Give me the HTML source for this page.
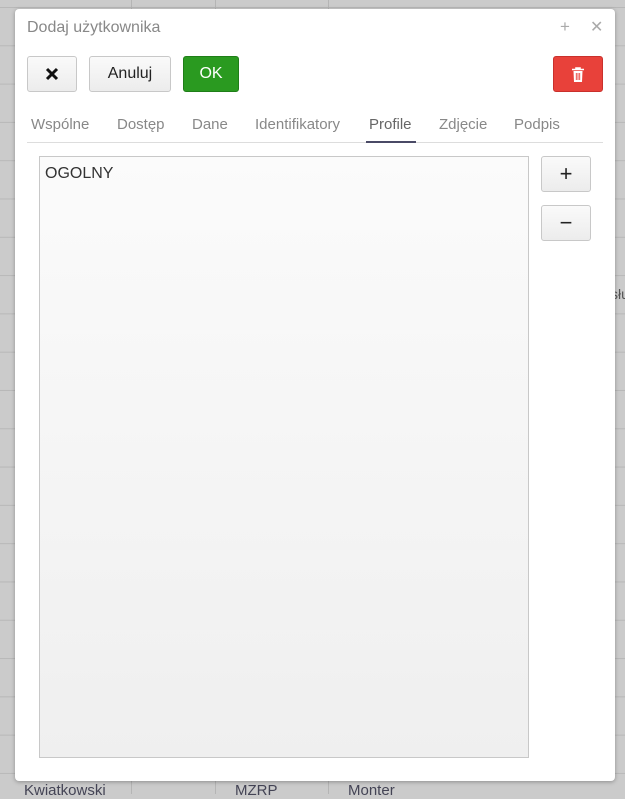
<!DOCTYPE html>
<html><head><meta charset="utf-8"><style>
*{box-sizing:border-box;margin:0;padding:0}
body{width:625px;height:794px;overflow:hidden;position:relative;font-family:"Liberation Sans",sans-serif;
background-color:#cbcbcb;
background-image:linear-gradient(#b8b8b8 1px,transparent 1px);
background-size:100% 38.3px;background-position:0 7px}
.vl{position:absolute;top:0;bottom:0;width:1px;background:#b5b5b5}
.dlg{position:absolute;left:15px;top:9px;width:600px;height:772px;background:#fff;border-radius:4px;box-shadow:0 1px 4px rgba(0,0,0,.3)}
.title{position:absolute;left:12px;top:10px;font-size:16px;color:#888}
.tc{position:absolute;top:8px;font-size:17px;color:#aaa}
.btn{position:absolute;top:47px;height:36px;border:1px solid #c8c8c8;border-radius:3px;background:linear-gradient(#fafafa,#ececec);font-size:16px;color:#222;display:flex;align-items:center;justify-content:center}
.tabs{position:absolute;left:12px;top:106px;width:576px;height:28px;border-bottom:1px solid #ddd}
.tab{position:absolute;top:1px;font-size:15px;color:#888}
.list{position:absolute;left:24px;top:147px;width:490px;height:602px;border:1px solid #c8c8c8;background:linear-gradient(#fbfbfb,#efefef)}
</style></head><body>
<div class="vl" style="left:131px"></div><div class="vl" style="left:215px"></div><div class="vl" style="left:328px"></div>
<div style="position:absolute;left:611px;top:286px;font-size:14px;color:#555">słu</div>
<div style="position:absolute;left:24px;top:782px;font-size:15px;color:#445">Kwiatkowski</div>
<div style="position:absolute;left:235px;top:782px;font-size:15px;color:#445">MZRP</div>
<div style="position:absolute;left:348px;top:782px;font-size:15px;color:#445">Monter</div>
<div class="dlg">
<div class="title">Dodaj użytkownika</div>
<div class="tc" style="left:545px">+</div>
<div class="tc" style="left:575px;font-size:16px">✕</div>
<div class="btn" style="left:12px;width:50px"><svg width="14" height="14" viewBox="0 0 14 14"><path d="M2 2L12 12M12 2L2 12" stroke="#111" stroke-width="3"/></svg></div>
<div class="btn" style="left:74px;width:82px">Anuluj</div>
<div class="btn" style="left:168px;width:56px;background:#2a9a20;border-color:#1f7e18;color:#fff">OK</div>
<div class="btn" style="left:538px;width:50px;background:#e8413a;border-color:#c9302c"><svg width="12" height="15" viewBox="0 0 12 15"><path d="M0 2.5H12M4 2.5V1H8V2.5" stroke="#fff" stroke-width="1.6" fill="none"/><path d="M1.5 4H10.5L10 15H2Z" fill="#fff"/><path d="M4.3 6V13M6 6V13M7.7 6V13" stroke="#e8413a" stroke-width="0.9"/></svg></div>
<div class="tabs">
<span class="tab" style="left:4px">Wspólne</span>
<span class="tab" style="left:90px">Dostęp</span>
<span class="tab" style="left:165px">Dane</span>
<span class="tab" style="left:228px">Identifikatory</span>
<span class="tab" style="left:342px;color:#666">Profile</span>
<div style="position:absolute;left:339px;top:26px;width:50px;height:2px;background:#4a4a66"></div>
<span class="tab" style="left:412px">Zdjęcie</span>
<span class="tab" style="left:487px">Podpis</span>
</div>
<div class="list"><div style="position:absolute;left:5px;top:8px;font-size:16px;color:#333">OGOLNY</div></div>
<div class="btn" style="left:526px;top:147px;width:50px;font-size:22px">+</div>
<div class="btn" style="left:526px;top:196px;width:50px;font-size:22px">−</div>
</div>
</body></html>
